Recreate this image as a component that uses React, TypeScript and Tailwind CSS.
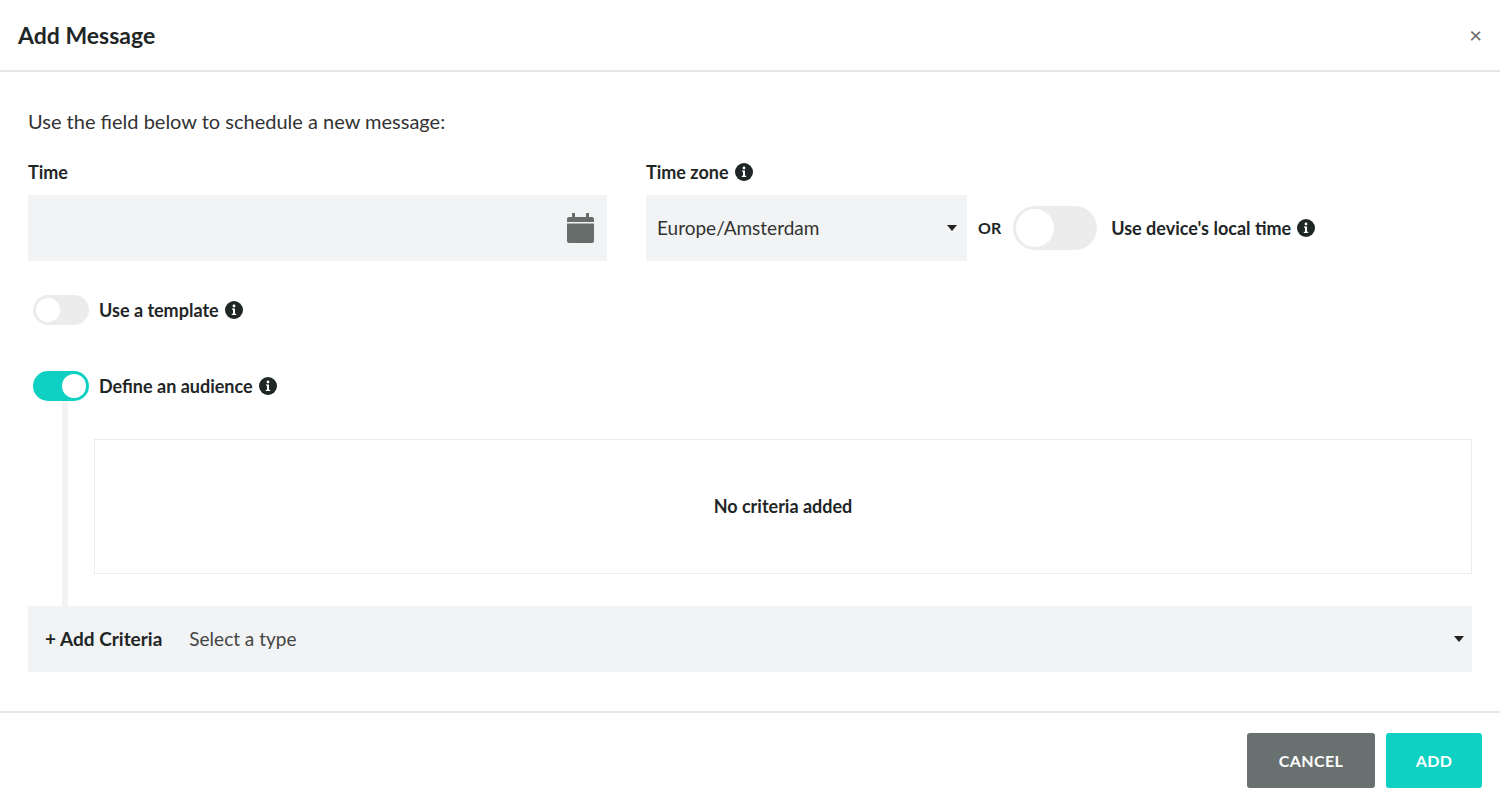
import React from "react";

const Info = () => (
  <svg width="18" height="18" viewBox="0 0 18 18" className="inline-block">
    <circle cx="9" cy="9" r="9" fill="#1f2626" />
    <circle cx="9" cy="5" r="1.4" fill="#fff" />
    <path d="M7 7.6h3v5.2h1.2V14H6.8v-1.2H8V8.8H7z" fill="#fff" />
  </svg>
);

const Toggle = ({ on, w, h }: { on?: boolean; w: number; h: number }) => (
  <div
    className={`relative rounded-full ${on ? "bg-[#0fd1c3]" : "bg-[#ececec]"}`}
    style={{ width: w, height: h }}
  >
    <div
      className="absolute top-[3px] rounded-full bg-white"
      style={{ width: h - 6, height: h - 6, left: on ? w - h + 3 : 3 }}
    />
  </div>
);

export default function App() {
  return (
    <div className="w-[1500px] h-[808px] bg-white text-[#1f2626] flex flex-col" style={{ fontFamily: "Lato, 'Open Sans', sans-serif" }}>
      <div className="h-[72px] border-b-2 border-[#e6e6e6] flex items-center justify-between pl-[18px] pr-[18px] shrink-0">
        <div className="text-[23px] font-bold">Add Message</div>
        <div className="text-[22px] text-[#666] leading-none">×</div>
      </div>
      <div className="flex-1 px-[28px] pt-[34px]">
        <div className="text-[20px] text-[#333]">Use the field below to schedule a new message:</div>
        <div className="flex mt-[24px]">
          <div className="w-[579px]">
            <div className="text-[18px] font-bold h-[24px] leading-[24px]">Time</div>
            <div className="mt-[11px] h-[66px] bg-[#f2f3f4] flex items-center justify-end pr-[13px]">
              <svg width="27" height="30" viewBox="0 0 27 30">
                <rect x="0" y="4" width="27" height="26" rx="2" fill="#666d6b" />
                <rect x="5" y="0" width="3" height="7" fill="#666d6b" />
                <rect x="19" y="0" width="3" height="7" fill="#666d6b" />
                <rect x="0" y="9" width="27" height="1.5" fill="#f2f3f4" />
              </svg>
            </div>
          </div>
          <div className="ml-[39px]">
            <div className="text-[18px] font-bold h-[24px] leading-[24px] flex items-center gap-[6px]">Time zone <Info /></div>
            <div className="mt-[11px] flex items-center">
              <div className="w-[321px] h-[66px] bg-[#f2f3f4] flex items-center justify-between pl-[11px] pr-[10px] text-[19px] text-[#333]">
                Europe/Amsterdam
                <svg width="10" height="6" viewBox="0 0 10 6"><path d="M0 0h10L5 6z" fill="#222" /></svg>
              </div>
              <span className="ml-[11px] text-[16px] font-bold">OR</span>
              <div className="ml-[12px]"><Toggle w={84} h={44} /></div>
              <span className="ml-[14px] text-[18px] font-bold flex items-center gap-[6px]">Use device's local time <Info /></span>
            </div>
          </div>
        </div>
        <div className="flex items-center mt-[34px] ml-[5px] gap-[10px]">
          <Toggle w={56} h={30} />
          <span className="text-[18px] font-bold flex items-center gap-[6px]">Use a template <Info /></span>
        </div>
        <div className="flex items-center mt-[46px] ml-[5px] gap-[10px]">
          <Toggle on w={56} h={30} />
          <span className="text-[18px] font-bold flex items-center gap-[6px]">Define an audience <Info /></span>
        </div>
        <div className="flex">
          <div className="ml-[34px] w-[6px] bg-[#f2f3f4] h-[205px]" />
          <div className="ml-[26px] mt-[38px] w-[1378px] h-[135px] border border-[#ececec] flex items-center justify-center text-[18px] font-bold">
            No criteria added
          </div>
        </div>
        <div className="h-[66px] bg-[#f2f3f4] flex items-center pl-[17px] pr-[8px]">
          <span className="text-[19px] font-bold">+ Add Criteria</span>
          <span className="ml-[27px] text-[19px] text-[#444] flex-1">Select a type</span>
          <svg width="10" height="6" viewBox="0 0 10 6"><path d="M0 0h10L5 6z" fill="#222" /></svg>
        </div>
      </div>
      <div className="h-[97px] border-t-2 border-[#e6e6e6] flex items-center justify-end gap-[11px] pr-[18px] shrink-0">
        <button className="w-[128px] h-[55px] rounded-[3px] bg-[#687170] text-white font-bold text-[16px] tracking-wide">CANCEL</button>
        <button className="w-[96px] h-[55px] rounded-[3px] bg-[#0fd1c3] text-white font-bold text-[16px] tracking-wide">ADD</button>
      </div>
    </div>
  );
}
